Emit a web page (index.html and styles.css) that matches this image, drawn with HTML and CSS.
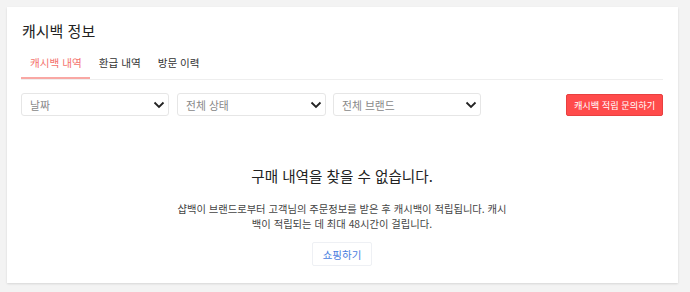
FILE: index.html
```html
<!DOCTYPE html>
<html lang="ko">
<head>
<meta charset="utf-8">
<link rel="stylesheet" href="styles.css">
</head>
<body>
<div class="card">
  <h1 class="title">캐시백 정보</h1>
  <div class="tabs">
    <div class="tab active">캐시백 내역</div>
    <div class="tab">환급 내역</div>
    <div class="tab">방문 이력</div>
  </div>
  <div class="filters">
    <div class="select s1"><span>날짜</span><svg width="12" height="8" viewBox="0 0 12 8"><path d="M1.5 1.5 L6 6 L10.5 1.5" fill="none" stroke="#222" stroke-width="1.8"/></svg></div>
    <div class="select s2"><span>전체 상태</span><svg width="12" height="8" viewBox="0 0 12 8"><path d="M1.5 1.5 L6 6 L10.5 1.5" fill="none" stroke="#222" stroke-width="1.8"/></svg></div>
    <div class="select s3"><span>전체 브랜드</span><svg width="12" height="8" viewBox="0 0 12 8"><path d="M1.5 1.5 L6 6 L10.5 1.5" fill="none" stroke="#222" stroke-width="1.8"/></svg></div>
    <div class="spacer"></div>
    <button class="ask">캐시백 적립 문의하기</button>
  </div>
  <div class="empty">
    <h2 class="empty-title">구매 내역을 찾을 수 없습니다.</h2>
    <p class="empty-text">샵백이 브랜드로부터 고객님의 주문정보를 받은 후 캐시백이 적립됩니다. 캐시백이 적립되는 데 최대 48시간이 걸립니다.</p>
    <button class="shop">쇼핑하기</button>
  </div>
</div>
</body>
</html>
```
FILE: styles.css
```css
html, body { margin: 0; padding: 0; }
body {
  background: #f3f3f3;
  font-family: "Noto Sans CJK KR", "Noto Sans", sans-serif;
  width: 690px;
  height: 292px;
  overflow: hidden;
}
.card {
  margin: 7px 0 0 7px;
  width: 671px;
  height: 276px;
  box-sizing: border-box;
  background: #fff;
  box-shadow: 0 1px 2px rgba(0,0,0,0.12);
  padding: 15px 15px 0 14px;
}
.title {
  margin: 0;
  font-size: 15px;
  font-weight: 400;
  color: #222;
  line-height: 18px;
  padding-left: 1px;
}
.tabs {
  display: flex;
  margin-top: 13px;
  border-bottom: 1px solid #eee;
  height: 27px;
  box-sizing: border-box;
}
.tab {
  font-size: 10.6px;
  color: #333;
  padding: 2px 8px 0 9px;
  line-height: 16px;
  white-space: nowrap;
}
.tab.active {
  color: #f4726c;
  border-bottom: 2px solid #f9a8a4;
}
.filters {
  display: flex;
  align-items: center;
  margin-top: 13px;
  height: 23px;
}
.select {
  box-sizing: border-box;
  height: 23px;
  border: 1px solid #e6e6e6;
  border-radius: 3px;
  display: flex;
  align-items: center;
  justify-content: space-between;
  padding: 0 3px 0 8px;
  margin-right: 8px;
  font-size: 10.8px;
  color: #888;
}
.s1 { width: 148px; }
.s2 { width: 149px; margin-right: 7px; }
.s3 { width: 148px; margin-right: 0; }
.spacer { flex: 1; }
.ask {
  background: #ff4b4b;
  color: #fff;
  border: 1px solid #e84040;
  border-radius: 2px;
  font-family: inherit;
  font-size: 9.2px;
  height: 22px;
  width: 97px;
  padding: 0;
}
.empty {
  display: flex;
  flex-direction: column;
  align-items: center;
  margin-top: 50px;
}
.empty-title {
  margin: 0;
  font-size: 14.6px;
  font-weight: 400;
  color: #222;
  line-height: 20px;
}
.empty-text {
  margin: 15px 0 0 0;
  width: 334px;
  text-align: center;
  font-size: 10.3px;
  line-height: 15px;
  color: #444;
}
.shop {
  margin-top: 11px;
  background: #fff;
  border: 1px solid #eef0f4;
  border-radius: 2px;
  color: #4a7de0;
  font-family: inherit;
  font-size: 10.5px;
  width: 60px;
  height: 24px;
  padding: 0;
}
```
